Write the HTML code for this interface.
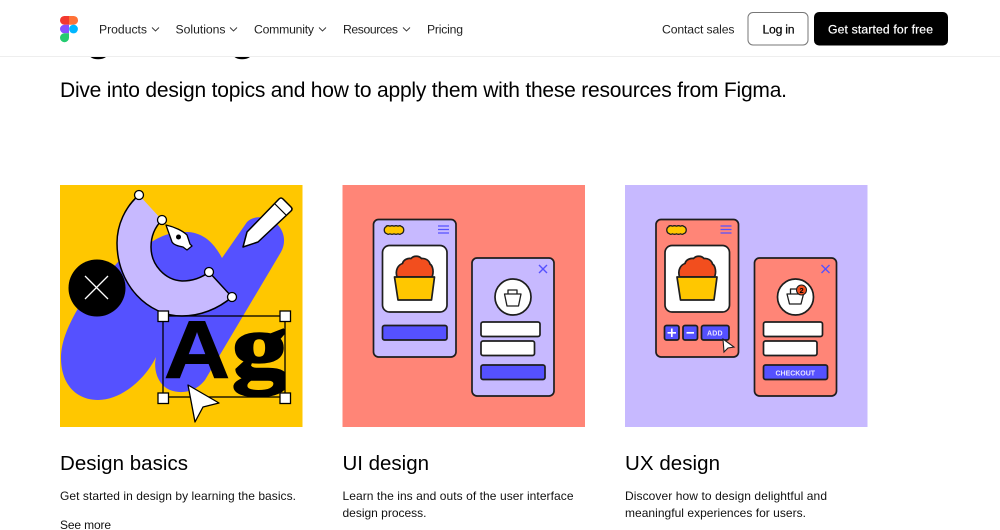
<!DOCTYPE html>
<html><head><meta charset="utf-8"><title>Figma design topics</title>
<style>
html,body{margin:0;padding:0;background:#fff;width:1000px;height:530px;overflow:hidden}
svg{display:block}
text{font-family:"Liberation Sans",sans-serif;fill:#000}
.n{font-size:12.200px;fill:#222}
.d{font-size:12px;fill:#111}
.t{font-size:20.500px}
.s{stroke:#1e1e1e;stroke-width:1.700}
</style></head><body>
<svg width="1000" height="530" viewBox="0 0 1000 530" xmlns="http://www.w3.org/2000/svg">
<defs>
<clipPath id="ag"><rect x="160" y="310" width="125" height="88"/></clipPath>
<g id="cup">
<path d="M397 277C395 270 398 265 402.500 263.500C403.500 259.500 408 258 411 258.500C413.500 255.500 419 255.500 421.500 258.500C425 258 429 260 430 264C433 266 434 272 432 277Z" fill="#F24E1E" class="s"/>
<path d="M394.500 277H434.500L431.500 300H398Z" fill="#FFC700" class="s" stroke-linejoin="round"/>
</g>
<g id="pillogo">
<path d="M386 226.200q2-1 4 0q2-1 4 0q2-1 4 0q2-1 3 0a4 4 0 0 1 0 7.600q-1 1-3 0q-2 1-4 0q-2 1-4 0q-2 1-3 0a4 4 0 0 1 0-7.600z" fill="#FFC700" stroke="#1e1e1e" stroke-width="1.300"/>
</g>
</defs>

<!-- Card 1 -->
<rect x="60" y="185" width="242.500" height="242" fill="#FFC700"/>
<path d="M156 357C146 378 122 400 98 400C76 400 61 384 61 358C61 340 70 322 80 305L118 262L150 243C165 233 175 232 188 232C205 233 215 245 222 258L247 222C255 214 270 217 277 224C285 232 286 243 281 252L205 380C195 393 180 394 170 390C158 385 153 370 156 357Z" fill="#5551FF"/>
<circle cx="97" cy="288" r="28.500" fill="#000"/>
<path d="M85 276L108 299M108 276L85 299" stroke="#fff" stroke-width="1.300"/>
<path d="M139 195C125 207 117 225 117 243C117 285 148 316 182 316C200 316 218 309 232 297L209 272C200 279 191 281 182 281C165 280 151 265 151 247C151 235 156 226 162 220Z" fill="#C7B9FF"/>
<path d="M139 195C125 207 117 225 117 243C117 285 148 316 182 316C200 316 218 309 232 297L209 272C200 279 191 281 182 281C165 280 151 265 151 247C151 235 156 226 162 220" fill="none" stroke="#000" stroke-width="1.500"/>
<circle cx="139" cy="195" r="4.500" fill="#fff" stroke="#000" stroke-width="1.300"/>
<circle cx="162" cy="220" r="4.500" fill="#fff" stroke="#000" stroke-width="1.300"/>
<circle cx="209" cy="272" r="4.500" fill="#fff" stroke="#000" stroke-width="1.300"/>
<circle cx="232" cy="297" r="4.500" fill="#fff" stroke="#000" stroke-width="1.300"/>
<path d="M166 225C175 227 183 231 187 235L190 244L192 246L187 250L183 247C178 246 174 245 172 242C170 236 168 231 166 225Z" fill="#fff" stroke="#000" stroke-width="1.300" stroke-linejoin="round"/>
<circle cx="178.500" cy="237" r="2.500" fill="#000"/>
<path d="M243 247L247 232L279 199Q281 197 283 199L291 207Q293 209 291 211L258 242Z" fill="#fff" stroke="#000" stroke-width="1.500" stroke-linejoin="round"/>
<path d="M275 204L286 215" stroke="#000" stroke-width="1.200"/>
<rect x="163" y="316" width="122" height="81" fill="none" stroke="#000" stroke-width="1.300"/>
<g clip-path="url(#ag)">
<text x="164" y="378" font-size="82" font-weight="700" textLength="66" lengthAdjust="spacingAndGlyphs" stroke="#000" stroke-width="1">A</text>
<text x="232" y="376" font-size="90" font-weight="700" textLength="56" lengthAdjust="spacingAndGlyphs" stroke="#000" stroke-width="2.500" style="font-family:'Liberation Serif',serif">g</text>
</g>
<g fill="#fff" stroke="#000" stroke-width="1.300">
<rect x="158" y="311" width="10.500" height="10.500"/><rect x="280" y="311" width="10.500" height="10.500"/>
<rect x="158" y="393" width="10.500" height="10.500"/><rect x="280" y="393" width="10.500" height="10.500"/>
</g>
<path d="M188 385L219 403L203 407L195 422Z" fill="#fff" stroke="#000" stroke-width="1.300" stroke-linejoin="round"/>

<!-- Card 2 -->
<rect x="342.500" y="185" width="242.500" height="242" fill="#FF8577"/>
<rect x="373.500" y="219.500" width="82.500" height="137.500" rx="5" fill="#C7B9FF" class="s"/>
<use href="#pillogo"/>
<path d="M438 226H449M438 229.500H449M438 233H449" stroke="#5551FF" stroke-width="1.300"/>
<rect x="382.500" y="245.500" width="64.500" height="66.500" rx="7" fill="#fff" class="s"/>
<use href="#cup"/>
<rect x="382.500" y="325.500" width="64.500" height="14.500" rx="2" fill="#5551FF" class="s"/>
<rect x="472" y="258" width="82" height="138" rx="5" fill="#C7B9FF" class="s"/>
<path d="M539 265L547 273M547 265L539 273" stroke="#5551FF" stroke-width="1.400"/>
<circle cx="513" cy="297" r="18" fill="#fff" class="s"/>
<path d="M504.500 294H521L518.500 306H507ZM508 294V290H517V294" fill="none" stroke="#1e1e1e" stroke-width="1.300" stroke-linejoin="round"/>
<rect x="481" y="322" width="59" height="14.500" rx="2" fill="#fff" class="s"/>
<rect x="481" y="341" width="53.500" height="14.500" rx="2" fill="#fff" class="s"/>
<rect x="481" y="365" width="64" height="14.500" rx="2" fill="#5551FF" class="s"/>

<!-- Card 3 -->
<rect x="625" y="185" width="242.500" height="242" fill="#C7B9FF"/>
<g transform="translate(282.500 0)">
<rect x="373.500" y="219.500" width="82.500" height="137.500" rx="5" fill="#FF8577" class="s"/>
<use href="#pillogo"/>
<path d="M438 226H449M438 229.500H449M438 233H449" stroke="#5551FF" stroke-width="1.300"/>
<rect x="382.500" y="245.500" width="64.500" height="66.500" rx="7" fill="#fff" class="s"/>
<use href="#cup"/>
<rect x="472" y="258" width="82" height="138" rx="5" fill="#FF8577" class="s"/>
<path d="M539 265L547 273M547 265L539 273" stroke="#5551FF" stroke-width="1.400"/>
<circle cx="513" cy="297" r="18" fill="#fff" class="s"/>
<path d="M504.500 294H521L518.500 304H507ZM508 294V289H517V294" fill="none" stroke="#1e1e1e" stroke-width="1.300" stroke-linejoin="round"/>
<rect x="481" y="322" width="59" height="14.500" rx="2" fill="#fff" class="s"/>
<rect x="481" y="341" width="53.500" height="14.500" rx="2" fill="#fff" class="s"/>
<rect x="481" y="365" width="64" height="14.500" rx="2" fill="#5551FF" class="s"/>
</g>
<rect x="664.500" y="325.500" width="14.500" height="14.500" rx="2" fill="#5551FF" class="s"/>
<path d="M667.500 332.800H676M671.800 328.500V337" stroke="#fff" stroke-width="1.700"/>
<rect x="683" y="325.500" width="14.500" height="14.500" rx="2" fill="#5551FF" class="s"/>
<path d="M686.500 332.800H694" stroke="#fff" stroke-width="1.700"/>
<rect x="701.500" y="325.500" width="27.500" height="14.500" rx="2" fill="#5551FF" class="s"/>
<text x="707" y="335.500" font-size="7" font-weight="700" textLength="15.500" style="fill:#e8e4ff">ADD</text>
<path d="M723 339L734 347L728 348L724 352Z" fill="#fff" stroke="#1e1e1e" stroke-width="1.100"/>
<text x="775.500" y="375.500" font-size="7" font-weight="700" textLength="39.500" style="fill:#e8e4ff">CHECKOUT</text>
<circle cx="801.500" cy="290" r="5" fill="#F24E1E" stroke="#1e1e1e" stroke-width="1.100"/>
<text x="799.500" y="293" font-size="7.500" font-weight="700">2</text>

<!-- Heading tails peeking below nav -->
<path d="M90.500 57C94 60 102 60 106 57Z" fill="#000"/>
<path d="M234.500 57C238 60 246 60 250 57Z" fill="#000"/>

<!-- Nav -->
<rect x="0" y="56" width="1000" height="1" fill="#eeeeee"/>
<path d="M60 20.300A4.300 4.300 0 0 1 64.300 16H69V24.700H64.300A4.300 4.300 0 0 1 60 20.300Z" fill="#F3392F"/>
<path d="M69 16H73.700A4.300 4.300 0 0 1 73.700 24.700H69Z" fill="#FF7237"/>
<path d="M60 29A4.300 4.300 0 0 1 64.300 24.700H69V33.300H64.300A4.300 4.300 0 0 1 60 29Z" fill="#874FFF"/>
<circle cx="73.500" cy="29" r="4.400" fill="#00B6FF"/>
<path d="M60 37.700A4.300 4.300 0 0 1 64.300 33.300H69V37.700A4.400 4.400 0 0 1 60 37.700Z" fill="#24CB71"/>

<text class="n" x="99" y="33.500" textLength="48">Products</text>
<path d="M152 27.500L155.500 31L159 27.500" fill="none" stroke="#333" stroke-width=".9"/>
<text class="n" x="175.500" y="33.500" textLength="50">Solutions</text>
<path d="M230 27.500L233.500 31L237 27.500" fill="none" stroke="#333" stroke-width=".9"/>
<text class="n" x="254" y="33.500" textLength="60">Community</text>
<path d="M319 27.500L322.500 31L326 27.500" fill="none" stroke="#333" stroke-width=".9"/>
<text class="n" x="343" y="33.500" textLength="55">Resources</text>
<path d="M403 27.500L406.500 31L410 27.500" fill="none" stroke="#333" stroke-width=".9"/>
<text class="n" x="427" y="33.500" textLength="36">Pricing</text>
<text class="n" x="662" y="33.500" textLength="72.500">Contact sales</text>
<rect x="748" y="12.500" width="60" height="32.500" rx="5" fill="#fff" stroke="#777" stroke-width="1"/>
<text x="762.500" y="33.500" font-size="12.200" textLength="32" stroke="#000" stroke-width=".2">Log in</text>
<rect x="814" y="12" width="134" height="33.500" rx="5" fill="#000"/>
<text x="828" y="33.500" font-size="12.200" textLength="105" stroke="#fff" stroke-width=".2" style="fill:#fff">Get started for free</text>

<!-- Text -->
<text x="60" y="97" font-size="21" textLength="727">Dive into design topics and how to apply them with these resources from Figma.</text>
<text class="t" x="60" y="470" textLength="128">Design basics</text>
<text class="t" x="342.500" y="470" textLength="86.500">UI design</text>
<text class="t" x="625" y="470" textLength="95">UX design</text>
<text class="d" x="60" y="500" textLength="236">Get started in design by learning the basics.</text>
<text class="d" x="60" y="529" textLength="51">See more</text>
<text class="d" x="342.500" y="500" textLength="231">Learn the ins and outs of the user interface</text>
<text class="d" x="342.500" y="517" textLength="84">design process.</text>
<text class="d" x="625" y="500" textLength="202">Discover how to design delightful and</text>
<text class="d" x="625" y="517" textLength="181">meaningful experiences for users.</text>
</svg>
</body></html>
